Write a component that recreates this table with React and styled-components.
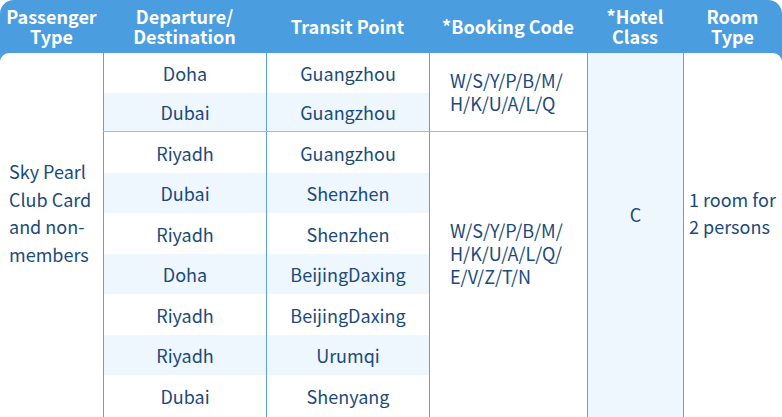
import React from 'react';
import styled, { createGlobalStyle } from 'styled-components';

const GlobalStyle = createGlobalStyle`
    html, body {
        margin: 0;
        padding: 0;
        overflow: hidden;
        background: #FFFFFF;
    }
    body {
        font-family: "Noto Sans CJK SC", "Noto Sans", sans-serif;
    }
`;

const COLUMNS = '103px 163px 163px 158px 96px 99px';

const Card = styled.div`
    width: 782px;
    background: #4A9DDF;
    border-radius: 14px 14px 0 0;
`;

const HeadRow = styled.div`
    display: grid;
    grid-template-columns: ${COLUMNS};
    height: 53px;
`;

const HeadCell = styled.div`
    display: flex;
    align-items: center;
    justify-content: center;
    text-align: center;
    color: #FFFFFF;
    font-weight: 700;
    font-size: 18px;
    line-height: 20px;
    padding-bottom: 1px;
`;

const Body = styled.div`
    display: grid;
    grid-template-columns: ${COLUMNS};
    grid-template-rows: 40px 39px 41px 40px 41px 40px 41px 40px 42px;
    background: #FFFFFF;
    border-radius: 9px 9px 0 0;
    color: #1B4A7B;
    font-size: 18px;
`;

const Cell = styled.div`
    grid-column: ${p => p.$col} / span ${p => p.$cols || 1};
    grid-row: ${p => p.$row} / span ${p => p.$span || 1};
    display: flex;
    align-items: center;
    justify-content: center;
    background: ${p => (p.$striped ? '#EEF6FE' : 'transparent')};
    border-left: ${p => (p.$divider ? '1px solid #5BA2E2' : 'none')};
    white-space: nowrap;
`;

const Pair = styled.div`
    grid-column: 2 / span 2;
    grid-row: ${p => p.$row};
    display: grid;
    grid-template-columns: 163px 163px;
    background: ${p => (p.$striped ? '#EEF6FE' : 'transparent')};
    border-bottom: ${p => (p.$ruled ? '1px solid #8DC1EF' : 'none')};
`;

const PairCell = styled.div`
    display: flex;
    align-items: center;
    justify-content: center;
    border-left: 1px solid #5BA2E2;
`;

const SpanCell = styled(Cell)`
    justify-content: flex-start;
    padding-left: ${p => p.$indent || 0}px;
    padding-bottom: ${p => p.$lift || 0}px;
    line-height: ${p => p.$lh || 27}px;
    white-space: normal;
    border-bottom: ${p => (p.$ruled ? '1px solid #8DC1EF' : 'none')};
`;

const CentreCell = styled(Cell)`
    padding-bottom: 42px;
    background: #EEF6FE;
`;

const routes = [
    ['Doha', 'Guangzhou'],
    ['Dubai', 'Guangzhou'],
    ['Riyadh', 'Guangzhou'],
    ['Dubai', 'Shenzhen'],
    ['Riyadh', 'Shenzhen'],
    ['Doha', 'BeijingDaxing'],
    ['Riyadh', 'BeijingDaxing'],
    ['Riyadh', 'Urumqi'],
    ['Dubai', 'Shenyang'],
];

export default function App() {
    return (
        <>
            <GlobalStyle />
            <Card>
                <HeadRow>
                    <HeadCell>Passenger<br />Type</HeadCell>
                    <HeadCell>Departure/<br />Destination</HeadCell>
                    <HeadCell>Transit Point</HeadCell>
                    <HeadCell>*Booking Code</HeadCell>
                    <HeadCell>*Hotel<br />Class</HeadCell>
                    <HeadCell>Room<br />Type</HeadCell>
                </HeadRow>
                <Body>
                    <SpanCell $col={1} $row={1} $span={9} $indent={9} $lift={44} $lh={27.5}>
                        Sky Pearl Club Card and non-members
                    </SpanCell>
                    {routes.map((r, i) => (
                        <Pair key={i} $row={i + 1} $striped={i % 2 === 1} $ruled={i === 1}>
                            <PairCell>{r[0]}</PairCell>
                            <PairCell>{r[1]}</PairCell>
                        </Pair>
                    ))}
                    <SpanCell $col={4} $row={1} $span={2} $divider $indent={20} $lh={23} $ruled>
                        W/S/Y/P/B/M/<br />H/K/U/A/L/Q
                    </SpanCell>
                    <SpanCell $col={4} $row={3} $span={7} $divider $indent={20} $lift={42} $lh={23}>
                        W/S/Y/P/B/M/<br />H/K/U/A/L/Q/<br />E/V/Z/T/N
                    </SpanCell>
                    <CentreCell $col={5} $row={1} $span={9} $divider>C</CentreCell>
                    <SpanCell $col={6} $row={1} $span={9} $divider $indent={5} $lift={44}>
                        1 room for<br />2 persons
                    </SpanCell>
                </Body>
            </Card>
        </>
    );
}
